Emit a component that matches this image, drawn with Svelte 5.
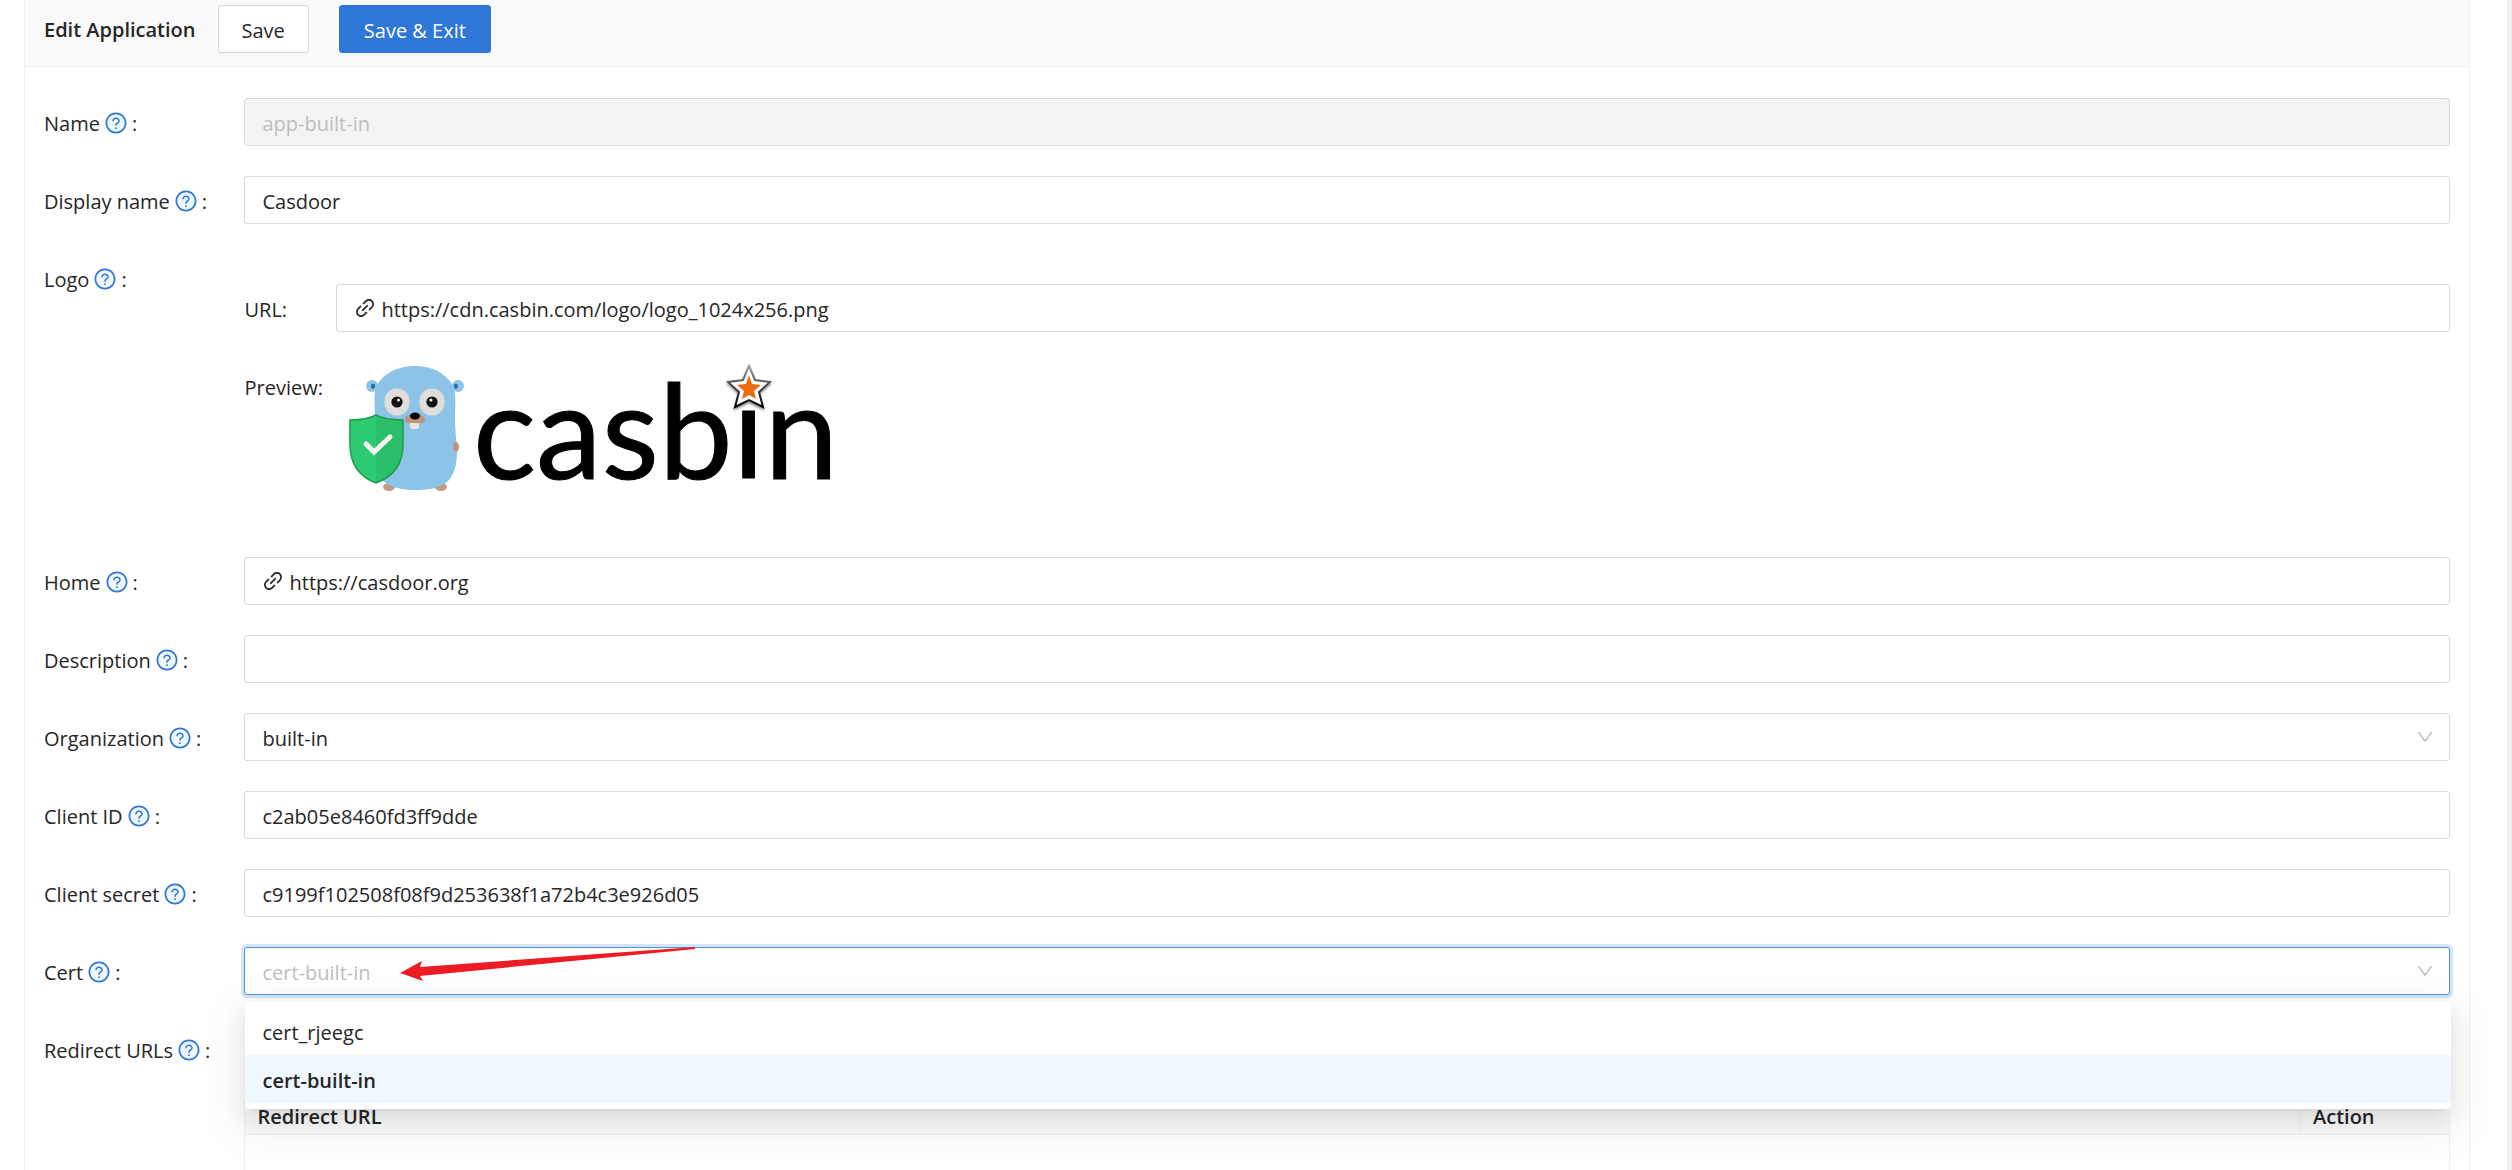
<script lang="ts">
  type Field = {
    id: string;
    label: string;
    kind: "text" | "link" | "select" | "logo" | "cert" | "urls";
    value?: string;
    disabled?: boolean;
  };

  const fields: Field[] = [
    { id: "name", label: "Name", kind: "text", value: "app-built-in", disabled: true },
    { id: "display-name", label: "Display name", kind: "text", value: "Casdoor" },
    { id: "logo", label: "Logo", kind: "logo", value: "https://cdn.casbin.com/logo/logo_1024x256.png" },
    { id: "home", label: "Home", kind: "link", value: "https://casdoor.org" },
    { id: "description", label: "Description", kind: "text", value: "" },
    { id: "organization", label: "Organization", kind: "select", value: "built-in" },
    { id: "client-id", label: "Client ID", kind: "text", value: "c2ab05e8460fd3ff9dde" },
    { id: "client-secret", label: "Client secret", kind: "text", value: "c9199f102508f08f9d253638f1a72b4c3e926d05" },
    { id: "cert", label: "Cert", kind: "cert" },
    { id: "redirect-urls", label: "Redirect URLs", kind: "urls" },
  ];

  const certs = ["cert_rjeegc", "cert-built-in"];
  let cert = $state("cert-built-in");
  let open = $state(true);

  function pick(name: string) {
    cert = name;
    open = false;
  }
</script>

{#snippet helpIcon()}
  <svg class="help" viewBox="0 0 1024 1024" aria-hidden="true">
    <circle cx="512" cy="512" r="410" fill="#f0f8ff" />
    <path d="M512 64C264.6 64 64 264.6 64 512s200.6 448 448 448 448-200.6 448-448S759.4 64 512 64zm0 820c-205.4 0-372-166.6-372-372s166.6-372 372-372 372 166.6 372 372-166.6 372-372 372z" />
    <path d="M623.6 316.7C593.6 290.4 554 276 512 276s-81.6 14.5-111.6 40.7C369.2 344 352 380.7 352 420v7.6c0 4.4 3.6 8 8 8h48c4.4 0 8-3.6 8-8V420c0-44.1 43.1-80 96-80s96 35.9 96 80c0 31.1-22 59.6-56.1 72.7-21.2 8.1-39.2 22.3-52.1 40.9-13.1 19-19.9 41.8-19.9 64.9V620c0 4.4 3.6 8 8 8h48c4.4 0 8-3.6 8-8v-22.7a48.3 48.3 0 0130.9-44.8c59-22.7 97.1-74.7 97.1-132.5.1-39.3-17.1-76-48.3-103.3zM472 732a40 40 0 1080 0 40 40 0 10-80 0z" />
  </svg>
{/snippet}

{#snippet downIcon()}
  <svg class="down" viewBox="0 0 1024 1024" aria-hidden="true">
    <path d="M884 256h-75c-5.1 0-9.9 2.5-12.9 6.6L512 654.2 227.9 262.6c-3-4.1-7.8-6.6-12.9-6.6h-75c-6.5 0-10.3 7.4-6.5 12.7l352.6 486.1c12.8 17.6 39 17.6 51.7 0l352.6-486.1c3.8-5.3 0-12.7-6.5-12.7z" />
  </svg>
{/snippet}

{#snippet linkInput(id: string, value: string)}
  <div class="control affix">
    <svg class="link" viewBox="0 0 1024 1024" aria-hidden="true">
      <path d="M574 665.4a8.03 8.03 0 00-11.3 0L446.5 781.6c-53.8 53.8-144.6 59.5-204 0-59.5-59.5-53.8-150.2 0-204l116.2-116.2c3.1-3.1 3.1-8.2 0-11.3l-39.8-39.8a8.03 8.03 0 00-11.3 0L191.4 526.5c-84.6 84.6-84.6 221.5 0 306s221.5 84.6 306 0l116.2-116.2c3.1-3.1 3.1-8.2 0-11.3L574 665.4zm258.6-474c-84.6-84.6-221.5-84.6-306 0L410.3 307.6a8.03 8.03 0 000 11.3l39.7 39.7c3.1 3.1 8.2 3.1 11.3 0l116.2-116.2c53.8-53.8 144.6-59.5 204 0 59.5 59.5 53.8 150.2 0 204L665.3 562.6a8.03 8.03 0 000 11.3l39.8 39.8c3.1 3.1 8.2 3.1 11.3 0l116.2-116.2c84.5-84.6 84.5-221.5 0-306.1zM610.1 372.3a8.03 8.03 0 00-11.3 0L372.3 598.7a8.03 8.03 0 000 11.3l39.6 39.6c3.1 3.1 8.2 3.1 11.3 0l226.4-226.4c3.1-3.1 3.1-8.2 0-11.3l-39.5-39.6z" />
    </svg>
    <input {id} type="text" {value} />
  </div>
{/snippet}

{#snippet casbinLogo()}
  <svg class="preview" viewBox="0 0 600 150" role="img" aria-label="casbin logo">
    <defs>
      <linearGradient id="star-edge" x1="0" y1="0" x2="0" y2="1">
        <stop offset="0" stop-color="#a0a0a0" />
        <stop offset="0.5" stop-color="#444" />
        <stop offset="1" stop-color="#000" />
      </linearGradient>
      <filter id="star-shadow" x="-20%" y="-20%" width="140%" height="150%">
        <feDropShadow dx="0" dy="2" stdDeviation="1" flood-opacity="0.4" />
      </filter>
    </defs>

    <!-- ears, feet and hand sit behind the body -->
    <circle cx="36" cy="24" r="6" fill="#8cc4e8" />
    <circle cx="122" cy="24" r="6" fill="#8cc4e8" />
    <ellipse cx="53" cy="125" rx="6" ry="4" fill="#c69881" />
    <ellipse cx="105" cy="125" rx="6" ry="4" fill="#c69881" />
    <path d="M79 4C62 4 48 11 41 23C37 31 39 43 39 57C39 75 37 92 40 106C44 122 58 128 79 128C102 128 113 123 118 109C124 94 119 77 119 57C119 43 121 31 116 22C108 10 95 4 79 4Z" fill="#8cc4e8" />
    <ellipse cx="120" cy="85" rx="3" ry="5" fill="#c1937c" />
    <path d="M36 22c3-1 4 1 2 5c-3 0-4-3-2-5z" fill="#2171ad" />
    <path d="M121 22c-3-1-4 1-2 5c3 0 4-3 2-5z" fill="#2171ad" />

    <ellipse cx="61" cy="40" rx="13" ry="14" fill="#e0dedc" stroke="#a7c9df" />
    <ellipse cx="96" cy="40" rx="13" ry="14" fill="#e0dedc" stroke="#a7c9df" />
    <circle cx="61" cy="40" r="5.6" fill="#111" />
    <circle cx="96" cy="40" r="5.6" fill="#111" />
    <circle cx="62.5" cy="38" r="1.5" fill="#fff" />
    <circle cx="95" cy="38" r="1.5" fill="#fff" />
    <rect x="74" y="59" width="9" height="8" rx="2" fill="#e8e4df" />
    <path d="M69 58C69 54 74 52 79 52S89 54 89 58S84 61 79 61S69 62 69 58Z" fill="#c1937c" />
    <ellipse cx="79" cy="54" rx="5" ry="3.4" fill="#000" />

    <path d="M14 58C24 58 33 57 40 53C47 57 56 58 67 58V82C67 102 57 115 40 121C24 115 14 102 14 82Z" fill="#2ecc71" />
    <path d="M40 53C47 57 56 58 67 58V82C67 102 57 115 40 121Z" fill="#2bbf69" />
    <path d="M14 58C24 58 33 57 40 53C47 57 56 58 67 58V82C67 102 57 115 40 121C24 115 14 102 14 82Z" fill="none" stroke="#209c50" stroke-width="1.6" />
    <path d="M30 82L38 90L54 75" fill="none" stroke="#f5f5f5" stroke-width="5" stroke-linecap="round" />

    <text class="wordmark" x="137" y="117">casbin</text>
    <path d="M413 4L419 18L434 20L423 30L427 45L413 38L399 45L403 30L392 20L407 18Z" fill="#fff" stroke="url(#star-edge)" stroke-width="2" filter="url(#star-shadow)" />
    <path d="M413 13L416 22L425 23L418 29L420 37L413 33L406 37L408 29L401 23L410 22Z" fill="#ee6b12" />
  </svg>
{/snippet}

<div class="page">
  <main class="card">
    <header>
      <h1>Edit Application</h1>
      <button type="button">Save</button>
      <button type="button" class="primary">Save &amp; Exit</button>
    </header>

    <form>
      {#each fields as field (field.id)}
        <div class="row">
          <label class="name" for={field.id}>{field.label}{@render helpIcon()}:</label>

          {#if field.kind === "text"}
            <input class="control" id={field.id} type="text" value={field.value} disabled={field.disabled} />
          {:else if field.kind === "link"}
            {@render linkInput(field.id, field.value ?? "")}
          {:else if field.kind === "select"}
            <div class="select">
              <select class="control" id={field.id}>
                <option>{field.value}</option>
              </select>
              {@render downIcon()}
            </div>
          {:else if field.kind === "logo"}
            <div class="nested">
              <div class="subrow">
                <label class="subname" for={field.id}>URL:</label>
                {@render linkInput(field.id, field.value ?? "")}
              </div>
              <div class="subrow">
                <span class="subname">Preview:</span>
                {@render casbinLogo()}
              </div>
            </div>
          {:else if field.kind === "cert"}
            <div class="select open">
              <select class="control" id={field.id} bind:value={cert}>
                {#each certs as name}
                  <option value={name}>{name}</option>
                {/each}
              </select>
              {@render downIcon()}
              {#if open}
                <div class="menu" role="listbox" aria-label="Cert">
                  {#each certs as name}
                    <button
                      type="button"
                      role="option"
                      aria-selected={name === cert}
                      class:selected={name === cert}
                      onclick={() => pick(name)}
                    >{name}</button>
                  {/each}
                </div>
              {/if}
              <svg class="arrow" viewBox="0 0 460 40" aria-hidden="true">
                <path d="M156 26L178 14L176 20L451 0V2L176 29L179 34Z" />
              </svg>
            </div>
          {:else}
            <div class="urls">
              <table id={field.id}>
                <thead>
                  <tr>
                    <th>Redirect URL</th>
                    <th class="action">Action</th>
                  </tr>
                </thead>
                <tbody>
                  <tr>
                    <td></td>
                    <td></td>
                  </tr>
                </tbody>
              </table>
            </div>
          {/if}
        </div>
      {/each}
    </form>
  </main>
  <div class="scrollbar"></div>
</div>

<style>
  :global(body) {
    margin: 0;
    background: #fff;
  }

  .page {
    display: flex;
    height: 100vh;
    overflow: hidden;
    box-sizing: border-box;
    padding-left: 24px;
    color: #262626;
    font-family: "Open Sans", sans-serif;
    font-size: 20px;
    line-height: 33px;
  }

  .card {
    flex: 1;
    min-width: 0;
    height: max-content;
    margin-right: 37px;
    border: 1px solid #f0f0f0;
    border-top: 0;
  }

  .scrollbar {
    width: 5px;
    background: #f0f0f0;
  }

  header {
    display: flex;
    align-items: center;
    padding: 5px 19px 13px;
    background: #fafafa;
    border-bottom: 1px solid #f0f0f0;
  }

  h1 {
    margin: 0 22px 0 0;
    font-size: 20px;
    font-weight: 600;
  }

  header button {
    height: 48px;
    margin-right: 30px;
    padding: 2px 23px 0;
    background: #fff;
    color: inherit;
    border: 1px solid #d9d9d9;
    border-radius: 3px;
    box-shadow: 0 3px 0 rgba(0, 0, 0, 0.016);
    font: inherit;
  }

  header .primary {
    padding: 2px 24px 0;
    background: #2e77d6;
    border-color: #2e77d6;
    color: #fff;
  }

  form {
    display: flex;
    flex-direction: column;
    gap: 30px;
    padding: 31px 19px 0;
  }

  .row,
  .subrow {
    display: flex;
    align-items: flex-start;
  }

  .name {
    display: flex;
    flex: 0 0 8.3333%;
    align-items: center;
    padding-top: 9px;
  }

  .help {
    width: 24px;
    height: 24px;
    margin: 0 4px 2px;
    fill: #2e77d6;
  }

  .control {
    flex: 1;
    box-sizing: border-box;
    width: 100%;
    min-width: 0;
    height: 48px;
    padding: 2px 17px 0;
    background: #fff;
    color: inherit;
    border: 1px solid #d9d9d9;
    border-radius: 3px;
    outline: 0;
    font: inherit;
  }

  .control:disabled {
    background: #f4f4f4;
    color: #bfbfbf;
  }

  .affix {
    display: flex;
    align-items: center;
    gap: 4px;
    padding: 0 16px;
  }

  .affix input {
    flex: 1;
    min-width: 0;
    padding: 2px 0 0;
    background: none;
    color: inherit;
    border: 0;
    outline: 0;
    font: inherit;
  }

  .link {
    width: 24px;
    height: 24px;
    fill: #262626;
  }

  .select {
    position: relative;
    display: grid;
    flex: 1;
    align-items: center;
  }

  .select > :global(*) {
    grid-area: 1 / 1;
  }

  select {
    appearance: none;
  }

  .down {
    width: 20px;
    height: 20px;
    margin-right: 15px;
    justify-self: end;
    fill: #bfbfbf;
    pointer-events: none;
  }

  .open select {
    color: #bfbfbf;
    border-color: #4f93e3;
    box-shadow: 0 0 0 3px rgba(46, 119, 214, 0.2);
  }

  .menu {
    position: absolute;
    top: 54px;
    left: 1px;
    right: -1px;
    z-index: 1;
    padding: 6px 0;
    background: #fff;
    border-radius: 3px;
    box-shadow:
      0 4px 9px -6px rgba(0, 0, 0, 0.12),
      0 9px 24px 0 rgba(0, 0, 0, 0.08),
      0 14px 42px 12px rgba(0, 0, 0, 0.05);
  }

  .menu button {
    display: block;
    width: 100%;
    height: 48px;
    padding: 2px 17px 0;
    background: none;
    color: inherit;
    border: 0;
    font: inherit;
    text-align: left;
  }

  .menu .selected {
    background: #f0f8ff;
    font-weight: 600;
  }

  .arrow {
    position: absolute;
    top: 0;
    left: 0;
    z-index: 2;
    width: 460px;
    height: 40px;
    fill: #ed1c24;
    pointer-events: none;
  }

  .nested {
    display: flex;
    flex: 1;
    flex-direction: column;
    gap: 30px;
    padding: 30px 0 15px;
  }

  .subname {
    flex: 0 0 4.1667%;
    padding-top: 9px;
    white-space: nowrap;
  }

  .preview {
    width: 600px;
    height: 150px;
    overflow: visible;
  }

  .wordmark {
    font-family: Lato, sans-serif;
    font-size: 132px;
    fill: #000;
    stroke: #000;
    stroke-width: 1px;
  }

  .urls {
    flex: 1;
    padding-top: 75px;
  }

  table {
    width: 100%;
    border: 1px solid #f0f0f0;
    border-top: 0;
    border-spacing: 0;
  }

  th {
    padding: 0 12px 1px;
    background: #fafafa;
    border-bottom: 1px solid #f0f0f0;
    font-weight: 600;
    text-align: left;
  }

  .action {
    width: 124px;
    padding-left: 13px;
    border-left: 1px solid #f0f0f0;
  }

  td {
    height: 57px;
  }
</style>
